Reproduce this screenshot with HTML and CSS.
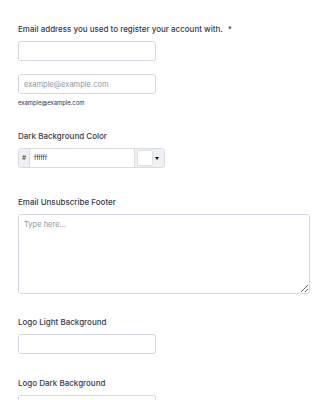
FILE: index.html
```html
<!DOCTYPE html>
<html>
<head>
<meta charset="utf-8">
<link rel="stylesheet" href="styles.css">
</head>
<body>
<form class="form">
  <div class="field f-email">
    <label class="label">Email address you used to register your account with. <span class="req">*</span></label>
    <input class="input short" type="text">
    <input class="input short confirm" type="text" placeholder="example@example.com">
    <div class="sublabel">example@example.com</div>
  </div>

  <div class="field f-color">
    <label class="label">Dark Background Color</label>
    <div class="color">
      <span class="hash">#</span>
      <span class="hexval">ffffff</span>
      <span class="swatch-wrap"><span class="swatch"></span><span class="caret"></span></span>
    </div>
  </div>

  <div class="field f-footer">
    <label class="label">Email Unsubscribe Footer</label>
    <textarea class="textarea" placeholder="Type here..."></textarea>
  </div>

  <div class="field f-logo1">
    <label class="label">Logo Light Background</label>
    <input class="input short" type="text">
  </div>

  <div class="field f-logo2">
    <label class="label">Logo Dark Background</label>
    <input class="input short" type="text">
  </div>
</form>
</body>
</html>
```

FILE: styles.css
```css
html, body {
  margin: 0;
  padding: 0;
  background: #ffffff;
}
body {
  font-family: Inter, "Liberation Sans", sans-serif;
  color: #2c3345;
}
.form {
  padding: 23px 15px 0 18px;
}
.field {
  display: flex;
  flex-direction: column;
  align-items: flex-start;
}
.label {
  font-size: 8px;
  line-height: 12px;
  font-weight: 500;
  color: #343a4b;
  margin-bottom: 6px;
}
.req {
  margin-left: 3px;
}
.input {
  box-sizing: border-box;
  height: 20px;
  border: 1px solid #d3d7e1;
  border-radius: 3px;
  padding: 0 5px;
  font-family: Inter, "Liberation Sans", sans-serif;
  font-size: 7.5px;
  color: #2c3345;
  background: #fff;
  outline: none;
}
.input::placeholder {
  color: #8f94a3;
}
.short {
  width: 138px;
}
.confirm {
  margin-top: 13px;
}
.sublabel {
  font-size: 5.9px;
  line-height: 10px;
  margin-top: 4px;
  color: #2c3345;
}
.f-color {
  margin-top: 22px;
}
.color {
  box-sizing: border-box;
  display: flex;
  width: 147px;
  height: 20px;
  border: 1px solid #d8dbe3;
  border-radius: 3px;
  overflow: hidden;
}
.hash {
  width: 10px;
  background: #eef0f4;
  border-right: 1px solid #d8dbe3;
  font-size: 6.5px;
  display: flex;
  align-items: center;
  justify-content: center;
  color: #2c3345;
}
.hexval {
  flex: 1;
  display: flex;
  align-items: center;
  padding-left: 4px;
  font-size: 6.5px;
  color: #2c3345;
}
.swatch-wrap {
  width: 27px;
  background: #eef0f4;
  border-left: 1px solid #d8dbe3;
  display: flex;
  align-items: center;
  padding-left: 2px;
  gap: 2px;
}
.swatch {
  box-sizing: border-box;
  width: 16px;
  height: 16px;
  background: #fff;
  border: 1px solid #dcdfe6;
  border-radius: 2px;
}
.caret {
  width: 0;
  height: 0;
  border-left: 2.5px solid transparent;
  border-right: 2.5px solid transparent;
  border-top: 3px solid #111;
}
.f-footer {
  margin-top: 28px;
}
.textarea {
  box-sizing: border-box;
  width: 292px;
  height: 80px;
  border: 1px solid #d3d7e1;
  border-radius: 3px;
  padding: 5px 5px;
  font-family: Inter, "Liberation Sans", sans-serif;
  font-size: 7.5px;
  resize: both;
  outline: none;
}
.textarea::placeholder {
  color: #8f94a3;
}
.f-logo1 {
  margin-top: 22px;
}
.f-logo2 {
  margin-top: 23px;
}
```
